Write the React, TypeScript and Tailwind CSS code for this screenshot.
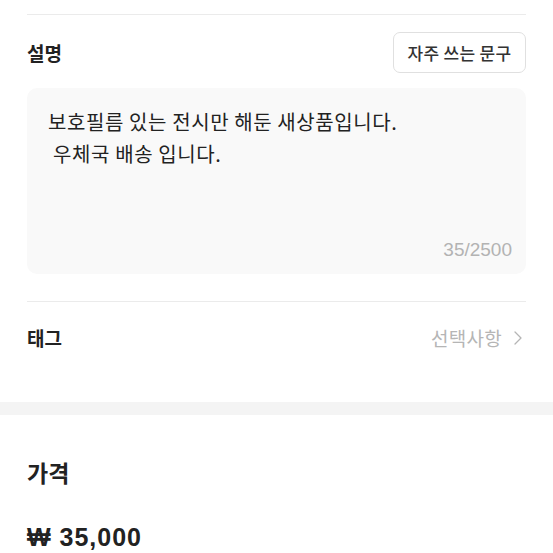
import { ChevronRight } from "lucide-react";

const font = { fontFamily: '"Noto Sans CJK KR", "Liberation Sans", sans-serif' };
const latin = { fontFamily: '"Liberation Sans", "Noto Sans CJK KR", sans-serif' };

export default function App() {
  return (
    <div className="w-[553px] h-[553px] overflow-hidden bg-white text-[#222]" style={font}>
      <div className="px-[27px] pt-[14px]">
        <div className="h-px bg-[#ebebeb]" />

        {/* 설명 */}
        <div className="flex items-center justify-between pt-[17px] pb-[15px]">
          <h3 className="text-[19px] font-bold leading-none">설명</h3>
          <button className="h-[41px] w-[133px] rounded-[7px] border border-[#e0e0e0] text-[17px] font-medium tracking-[0.3px] text-[#333]">
            자주 쓰는 문구
          </button>
        </div>

        <div className="flex h-[186px] flex-col rounded-[10px] bg-[#f9f9f9] pl-[21px] pr-[14px] pt-[18px] pb-[10px]">
          <p className="flex-1 whitespace-pre-line text-[20px] leading-[32px] tracking-[0.6px] text-[#222]">
            {"보호필름 있는 전시만 해둔 새상품입니다.\n\u00a0우체국 배송 입니다."}
          </p>
          <span className="self-end text-[19px] text-[#b3b3b3]" style={latin}>
            35/2500
          </span>
        </div>

        <div className="mt-[27px] h-px bg-[#ebebeb]" />

        {/* 태그 */}
        <div className="flex h-[100px] items-start justify-between pt-[24px]">
          <h3 className="text-[19px] font-bold leading-[24px]">태그</h3>
          <div className="flex items-center gap-[4px] text-[#b5b5b5]">
            <span className="text-[19px] leading-[24px] tracking-[0.3px]">선택사항</span>
            <ChevronRight size={24} strokeWidth={1.3} className="-mr-[4px]" />
          </div>
        </div>
      </div>

      <div className="h-[13px] bg-[#f4f4f4]" />

      {/* 가격 */}
      <div className="px-[27px] pt-[42px]">
        <h3 className="text-[23px] font-bold leading-[30px]">가격</h3>
        <p className="mt-[36px] text-[25px] font-bold leading-[28px] tracking-[1px]" style={latin}>
          ₩ 35,000
        </p>
      </div>
    </div>
  );
}
